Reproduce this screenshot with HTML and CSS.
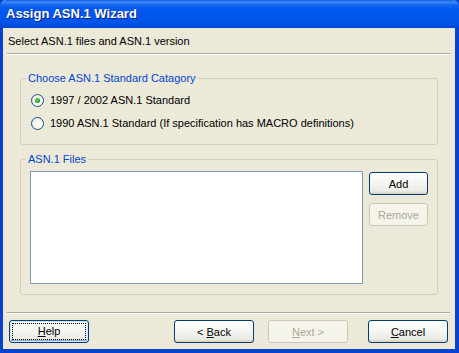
FILE: index.html
```html
<!DOCTYPE html>
<html lang="en">
<head>
    <meta charset="UTF-8">
    <meta name="viewport" content="width=device-width, initial-scale=1.0">
    <title>Assign ASN.1 Wizard</title>
    <link rel="stylesheet" href="styles.css">
</head>
<body>
    <div class="window">
        <div class="titlebar">Assign ASN.1 Wizard</div>
        <div class="content">
            <div class="subtitle">Select ASN.1 files and ASN.1 version</div>
            <div class="sep"></div>

            <fieldset class="group group-std">
                <legend>Choose ASN.1 Standard Catagory</legend>
                <div class="radio-row">
                    <span class="radio checked"></span>
                    <span>1997 / 2002 ASN.1 Standard</span>
                </div>
                <div class="radio-row">
                    <span class="radio"></span>
                    <span>1990 ASN.1 Standard (If specification has MACRO definitions)</span>
                </div>
            </fieldset>

            <fieldset class="group group-files">
                <legend>ASN.1 Files</legend>
                <div class="files">
                    <div class="listbox"></div>
                    <div class="side-buttons">
                        <button class="btn small">Add</button>
                        <button class="btn small" disabled>Remove</button>
                    </div>
                </div>
            </fieldset>

            <div class="sep sep-bottom"></div>

            <div class="footer">
                <button class="btn focused"><span class="focus"><u>H</u>elp</span></button>
                <div class="nav">
                    <button class="btn">&lt; <u>B</u>ack</button>
                    <button class="btn" disabled><u>N</u>ext &gt;</button>
                    <button class="btn cancel"><u>C</u>ancel</button>
                </div>
            </div>
        </div>
    </div>
</body>
</html>
```

FILE: styles.css
```css
html, body {
    margin: 0;
    padding: 0;
}

body {
    width: 459px;
    height: 353px;
    font-family: "Liberation Sans", Arial, sans-serif;
    font-size: 11px;
    color: #000;
    background: #ece9d8;
}

.window {
    width: 459px;
    height: 353px;
    box-sizing: border-box;
    display: flex;
    flex-direction: column;
    border-left: 3px solid #0842d0;
    border-right: 4px solid #0842d0;
    border-bottom: 4px solid #0842d0;
    box-shadow: inset 1px 0 0 #166aee;
}

.titlebar {
    height: 28px;
    margin: 0 -4px 0 -3px;
    padding-left: 6px;
    box-sizing: border-box;
    line-height: 28px;
    font-family: "Liberation Sans", Arial, sans-serif;
    font-weight: bold;
    font-size: 13px;
    color: #fff;
    text-shadow: 1px 1px 0 #0a1e8a;
    background: linear-gradient(to bottom, #0a5ae0 0, #3b8cf5 2px, #1463ee 5px, #0058ee 9px, #0055e8 80%, #0046d4 100%);
    border-radius: 6px 6px 0 0;
}

.content {
    flex: 1;
    display: flex;
    flex-direction: column;
    background: #ece9d8;
}

.subtitle {
    padding: 7px 0 0 5px;
    line-height: 13px;
}

.sep {
    height: 1px;
    margin: 5px 5px 0 4px;
    background: #aca899;
    border-bottom: 1px solid #fff;
}

.group {
    margin: 0 17px;
    padding: 0;
    border: 1px solid #d0d0bf;
    border-radius: 3px;
    min-width: 0;
}

.group legend {
    margin-left: 5px;
    padding: 0 2px;
    line-height: 13px;
    color: #0046d5;
}

.group-std {
    margin-top: 17px;
    padding: 7px 0 13px 0;
}

.radio-row {
    display: flex;
    align-items: center;
    gap: 6px;
    height: 16px;
    padding-left: 10px;
}

.radio-row + .radio-row {
    margin-top: 7px;
}

.radio {
    width: 11px;
    height: 11px;
    border: 1px solid #1c5180;
    border-radius: 50%;
    background: radial-gradient(circle at 60% 60%, #fff 0, #f3f3ef 50%, #dcdcd4 100%);
    display: flex;
    align-items: center;
    justify-content: center;
}

.radio.checked::after {
    content: "";
    width: 5px;
    height: 5px;
    border-radius: 50%;
    background: radial-gradient(circle at 40% 40%, #6fdc6f 0, #21a121 60%, #1a8a1a 100%);
}

.group-files {
    margin-top: 8px;
    padding: 5px 0 10px 0;
}

.files {
    display: flex;
    gap: 6px;
    padding-left: 9px;
}

.listbox {
    width: 331px;
    height: 111px;
    background: #fff;
    border: 1px solid #7f9db9;
}

.side-buttons {
    display: flex;
    flex-direction: column;
    gap: 8px;
    padding-top: 1px;
}

.btn {
    width: 80px;
    height: 23px;
    padding: 0;
    font-family: "Liberation Sans", Arial, sans-serif;
    font-size: 11px;
    color: #000;
    border: 1px solid #003c74;
    border-radius: 3px;
    background: linear-gradient(to bottom, #fff 0, #f7f7f4 40%, #ecebe6 85%, #d6d0c5 100%);
}

.btn.small {
    width: 59px;
}

.btn:disabled {
    color: #aca899;
    border-color: #c9c7ba;
    background: #f5f4ea;
}

.btn.focused {
    box-shadow: inset 0 0 0 1px #cee7ff, inset 0 -1px 0 1px #89ade4;
    padding: 2px;
}

.focus {
    display: block;
    height: 100%;
    box-sizing: border-box;
    line-height: 15px;
    border: 1px dotted #000;
}

.sep-bottom {
    margin-top: 17px;
}

.footer {
    display: flex;
    justify-content: space-between;
    margin: 6px 7px 0 6px;
}

.nav {
    display: flex;
    gap: 14px;
}

.nav .cancel {
    margin-left: 6px;
}
```
